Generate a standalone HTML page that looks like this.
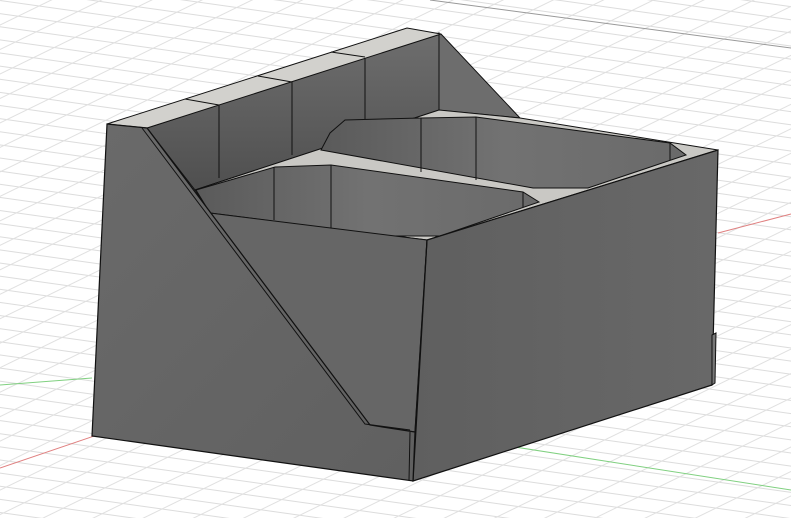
<!DOCTYPE html>
<html><head><meta charset="utf-8"><style>html,body{margin:0;padding:0;background:#fff;overflow:hidden}svg{display:block}</style></head>
<body>
<svg width="791" height="518" viewBox="0 0 791 518" xmlns="http://www.w3.org/2000/svg">
<defs>
<pattern id="pa" width="800" height="13" patternUnits="userSpaceOnUse" patternTransform="rotate(8)">
<line x1="0" y1="0.5" x2="800" y2="0.5" stroke="#dcdcdc" stroke-width="1"/>
</pattern>
<pattern id="pb" width="800" height="22" patternUnits="userSpaceOnUse" patternTransform="rotate(-26)">
<line x1="0" y1="0.5" x2="800" y2="0.5" stroke="#e0e0e0" stroke-width="1"/>
</pattern>
<linearGradient id="gf" x1="0" y1="0" x2="1" y2="0"><stop offset="0" stop-color="#5f5f5f"/><stop offset="1" stop-color="#686868"/></linearGradient>
<linearGradient id="gl" x1="0" y1="0" x2="1" y2="1"><stop offset="0" stop-color="#6a6a6a"/><stop offset="1" stop-color="#606060"/></linearGradient>
<linearGradient id="gb" x1="0" y1="0" x2="0" y2="1"><stop offset="0" stop-color="#6e6e6e"/><stop offset="1" stop-color="#4f4f4f"/></linearGradient>
<linearGradient id="gc" x1="0" y1="0" x2="1" y2="0"><stop offset="0" stop-color="#5a5a5a"/><stop offset="0.5" stop-color="#727272"/><stop offset="1" stop-color="#6a6a6a"/></linearGradient>
</defs>
<rect width="791" height="518" fill="#fff"/>
<rect width="791" height="518" fill="url(#pa)"/>
<rect width="791" height="518" fill="url(#pb)"/>
<line x1="430" y1="0" x2="791" y2="48" stroke="#999" stroke-width="1"/>
<line x1="0" y1="468" x2="150" y2="417" stroke="#e08080" stroke-width="1"/>
<line x1="718" y1="233" x2="791" y2="214" stroke="#e08080" stroke-width="1"/>
<line x1="0" y1="385" x2="92" y2="378" stroke="#80d080" stroke-width="1"/>
<line x1="457" y1="438" x2="791" y2="490" stroke="#80d080" stroke-width="1"/>

<polygon points="437,34 441,34 520,118 437,110" fill="#6d6d6d" stroke="#111" stroke-width="1"/>
<polygon points="147,128 439,33 439,110 195,190" fill="url(#gb)" stroke="#111" stroke-width="1"/>
<line x1="219" y1="105" x2="219" y2="178" stroke="#111"/>
<line x1="292" y1="82" x2="292" y2="155" stroke="#111"/>
<line x1="365" y1="57" x2="365" y2="132" stroke="#111"/>
<polygon points="107,124 407,28 441,34 147,128" fill="#d2d1cd" stroke="#111" stroke-width="1"/>
<line x1="185" y1="99" x2="219" y2="105" stroke="#111"/>
<line x1="258" y1="76" x2="292" y2="82" stroke="#111"/>
<line x1="331" y1="52" x2="365" y2="57" stroke="#111"/>
<polygon points="195,190 439,110 520,118 718,150 427,240 210,213" fill="#c9c8c4" stroke="#111" stroke-width="1"/>
<polygon points="321,150 330,133 345,120 421,118 476,117 670,143 686,155 588,188 533,188" fill="url(#gc)" stroke="#111" stroke-width="1"/>
<line x1="421" y1="118" x2="421" y2="172" stroke="#111"/>
<line x1="476" y1="117" x2="476" y2="180" stroke="#111"/>
<line x1="670" y1="143" x2="670" y2="160" stroke="#111"/>
<polygon points="196,190 275,167 331,165 523,192 539,202 440,236 388,236 210,213" fill="url(#gc)" stroke="#111" stroke-width="1"/>
<line x1="274" y1="167" x2="274" y2="220" stroke="#111"/>
<line x1="331" y1="165" x2="331" y2="228" stroke="#111"/>
<line x1="523" y1="192" x2="523" y2="207" stroke="#111"/>
<!-- inner front-left face -->
<polygon points="147,128 210,213 427,240 415,432 370,425" fill="#666" stroke="#111" stroke-width="1"/>
<polygon points="427,240 718,150 712,385 413,481" fill="url(#gf)" stroke="#111" stroke-width="1.2"/>
<polygon points="712,335 716,333 715,383 712,385" fill="#777" stroke="#111" stroke-width="1"/>
<polygon points="107,124 147,128 370,425 415,432 413,481 92,436" fill="url(#gl)" stroke="#111" stroke-width="1.2"/>
<polyline points="142,128 365,424 410,430" fill="none" stroke="#111" stroke-width="1"/>
<line x1="410" y1="432" x2="409" y2="480" stroke="#111" stroke-width="1"/>
<line x1="415" y1="432" x2="427" y2="240" stroke="#111" stroke-width="1.2"/>
</svg>
</body></html>
